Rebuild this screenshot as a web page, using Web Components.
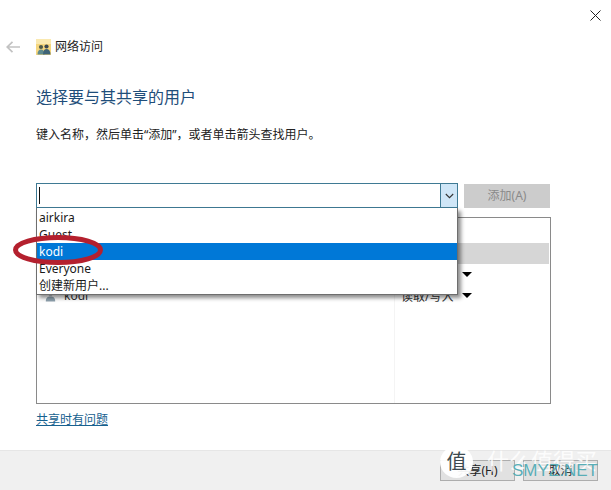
<!DOCTYPE html>
<html lang="zh">
<head>
<meta charset="utf-8">
<title>网络访问</title>
<style>
    html, body { margin: 0; padding: 0; background: #fff; }
    body { font-family: "Noto Sans", "Noto Sans CJK SC", sans-serif; font-size: 12px; color: #1a1a1a; }
</style>
</head>
<body>
<share-dialog></share-dialog>

<script>
const CJK = `"Noto Sans", "Noto Sans CJK SC", sans-serif`;

class NavHeader extends HTMLElement {
    constructor() {
        super();
        this.attachShadow({ mode: 'open' });
        this.shadowRoot.innerHTML = `
            <style>
                :host { display: block; font-family: ${CJK}; }
                .top { height: 37px; display: flex; justify-content: flex-end; padding: 10px 10px 0 0; box-sizing: border-box; }
                .nav { height: 19px; display: flex; align-items: center; padding-left: 6px; }
                .back { width: 14px; height: 12px; margin-right: 16px; }
                .icon { width: 15px; height: 16px; margin-right: 4px; }
                .title { font-size: 12px; line-height: 19px; color: #222; }
            </style>
            <div class="top">
                <svg width="11" height="11" viewBox="0 0 11 11"><path d="M.5.5l10 10M10.500.5l-10 10" stroke="#222" stroke-width="1" fill="none"/></svg>
            </div>
            <div class="nav">
                <svg class="back" viewBox="0 0 14 12"><path d="M6.500.8L1.200 6l5.300 5.200M1.500 6H14" stroke="#c2c2c2" stroke-width="1.700" fill="none"/></svg>
                <svg class="icon" viewBox="0 0 15 16">
                    <rect x="0" y="0" width="15" height="16" fill="#f5d67e"/>
                    <rect x="0" y="0" width="15" height="5" fill="#fae9b0"/>
                    <circle cx="5" cy="8" r="2.100" fill="#4d5a4a"/>
                    <circle cx="10.500" cy="7.500" r="2.100" fill="#3a4650"/>
                    <path d="M1.500 15.500c0-3.500 1.500-5 3.500-5s3.500 1.500 3.500 5z" fill="#5f8a8e"/>
                    <path d="M7 15.500c0-3.700 1.500-5.500 3.500-5.500s4 1.800 4 5.500z" fill="#3f6478"/>
                </svg>
                <span class="title">网络访问</span>
            </div>
        `;
    }
}

class UserCombo extends HTMLElement {
    constructor() {
        super();
        this.attachShadow({ mode: 'open' });
        this.shadowRoot.innerHTML = `
            <style>
                :host { display: block; position: relative; flex: 0 0 422px; font-family: ${CJK}; }
                .box { height: 25px; box-sizing: border-box; border: 1px solid #3f7a94; display: flex; background: #fff; }
                .field { flex: 1; display: flex; align-items: center; padding-left: 2px; }
                .caret { width: 1px; height: 17px; background: #111; }
                .drop { width: 16px; background: #cfe6f7; border-left: 1px solid #3f7a94; display: flex; align-items: center; justify-content: center; }
                .menu {
                    position: absolute; left: 0; right: 0; top: 25px; z-index: 3; height: 87px;
                    box-sizing: border-box; background: #fff;
                    border: 1px solid #6e6e6e; border-top: 0;
                    box-shadow: 3px 3px 4px rgba(0, 0, 0, .45);
                    padding-top: 1px;
                }
                ::slotted(*) { display: block; }
            </style>
            <div class="box">
                <div class="field"><span class="caret"></span></div>
                <div class="drop"><svg width="9" height="6" viewBox="0 0 9 6"><path d="M.8 1l3.700 3.700L8.200 1" stroke="#333" stroke-width="1.100" fill="none"/></svg></div>
            </div>
            <div class="menu"><slot></slot></div>
        `;
    }
}

class ComboOption extends HTMLElement {
    constructor() {
        super();
        this.attachShadow({ mode: 'open' });
        this.shadowRoot.innerHTML = `
            <style>
                :host { display: block; height: 17px; line-height: 17px; padding-left: 2px; font-size: 12px; color: #1a1a1a; white-space: nowrap; font-family: ${CJK}; }
                :host([selected]) { background: #0078d7; color: #fff; }
            </style>
            <slot></slot>
        `;
    }
}

class PermissionRow extends HTMLElement {
    constructor() {
        super();
        this.attachShadow({ mode: 'open' });
        this.shadowRoot.innerHTML = `
            <style>
                :host { display: grid; grid-template-columns: 357px 1fr; height: 21px; align-items: center; font-size: 12px; color: #333; font-family: ${CJK}; }
                :host([selected]) { background: #d6d6d6; margin-right: 1px; }
                :host([selected]) .arrow { display: none; }
                .name { display: flex; align-items: center; gap: 8px; padding-left: 8px; }
                .perm { display: flex; align-items: center; gap: 6px; padding-left: 7px; }
                .arrow { width: 0; height: 0; border: 5px solid transparent; border-top: 5px solid #000; border-bottom: 0; }
                .spacer { width: 55px; }
            </style>
            <div class="name">
                <svg width="11" height="12" viewBox="0 0 11 12"><circle cx="5.500" cy="3" r="2.600" fill="#7c8b96"/><path d="M.8 11.500c0-4 2-5 4.700-5s4.700 1 4.700 5z" fill="#8fa2ae"/></svg>
                <slot name="name"></slot>
            </div>
            <div class="perm"><span class="spacer"><slot name="perm"></slot></span><span class="arrow"></span></div>
        `;
    }
}

class UserList extends HTMLElement {
    constructor() {
        super();
        this.attachShadow({ mode: 'open' });
        this.shadowRoot.innerHTML = `
            <style>
                :host { display: block; position: relative; width: 515px; height: 187px; box-sizing: border-box; border: 1px solid #8a8a8a; background: #fff; margin-top: 9px; }
                .head { height: 25px; }
                .col { position: absolute; left: 357px; top: 0; bottom: 0; width: 1px; background: #f4f4f4; }
            </style>
            <div class="col"></div>
            <div class="head"></div>
            <slot></slot>
        `;
    }
}

class SmzdmMark extends HTMLElement {
    constructor() {
        super();
        this.attachShadow({ mode: 'open' });
        this.shadowRoot.innerHTML = `
            <style>
                :host { display: block; position: absolute; left: 440px; top: 446px; width: 165px; height: 40px; z-index: 5; pointer-events: none; font-family: ${CJK}; }
                .badge { position: absolute; left: 0; top: 0; width: 33px; height: 32px; border-radius: 50%; background: rgba(255, 255, 255, .94); color: #3c4a50; font-size: 20px; line-height: 32px; text-align: center; }
                .cn { position: absolute; left: 47px; top: 3px; font-size: 22px; line-height: 22px; color: rgba(255, 255, 255, .85); white-space: nowrap; }
                .en { position: absolute; left: 72px; top: 15px; font-size: 17px; line-height: 20px; color: rgba(80, 170, 180, .95); white-space: nowrap; font-family: "Liberation Sans", sans-serif; }
            </style>
            <div class="badge">值</div>
            <div class="cn">什么值得买</div>
            <div class="en">SMYZ.NET</div>
        `;
    }
}

class ShareDialog extends HTMLElement {
    constructor() {
        super();
        this.attachShadow({ mode: 'open' });
        this.shadowRoot.innerHTML = `
            <style>
                :host { display: flex; flex-direction: column; position: relative; width: 611px; height: 490px; overflow: hidden; background: #fff; font-family: ${CJK}; }
                main { flex: 1; }
                .content { padding: 0 0 0 36px; }
                h1 { margin: 30px 0 0; font-size: 16px; line-height: 22px; font-weight: 400; color: #1f4e7a; }
                p { margin: 18px 0 0; font-size: 12px; line-height: 18px; color: #222; }
                .row { display: flex; gap: 6px; margin-top: 39px; }
                .add { width: 86px; height: 24px; margin-top: 1px; background: #cccccc; color: #8a8a8a; font-size: 12px; line-height: 24px; text-align: center; }
                a { display: inline-block; margin-top: 7px; font-size: 12px; line-height: 17px; color: #17618f; text-decoration: underline; }
                footer { flex: 0 0 40px; box-sizing: border-box; border-top: 1px solid #e6e6e6; background: #f0f0f0; display: flex; justify-content: flex-end; gap: 8px; padding: 9px 13px 0 0; }
                .btn { width: 75px; height: 21px; box-sizing: border-box; border: 1px solid #adadad; background: #e1e1e1; font-size: 12px; line-height: 19px; text-align: center; color: #222; }
                .ring { position: absolute; left: 13px; top: 235px; width: 90px; height: 30px; z-index: 4; }
            </style>
            <main>
                <nav-header></nav-header>
                <div class="content">
                    <h1>选择要与其共享的用户</h1>
                    <p>键入名称，然后单击“添加”，或者单击箭头查找用户。</p>
                    <div class="row">
                        <user-combo>
                            <combo-option>airkira</combo-option>
                            <combo-option>Guest</combo-option>
                            <combo-option selected>kodi</combo-option>
                            <combo-option>Everyone</combo-option>
                            <combo-option>创建新用户...</combo-option>
                        </user-combo>
                        <div class="add">添加(A)</div>
                    </div>
                    <user-list>
                        <permission-row selected><span slot="name">airkira</span><span slot="perm">所有者</span></permission-row>
                        <permission-row><span slot="name">Everyone</span><span slot="perm">读取</span></permission-row>
                        <permission-row><span slot="name">kodi</span><span slot="perm">读取/写入</span></permission-row>
                    </user-list>
                    <a>共享时有问题</a>
                </div>
            </main>
            <footer>
                <div class="btn">共享(H)</div>
                <div class="btn">取消</div>
            </footer>
            <svg class="ring" viewBox="0 0 90 30"><ellipse cx="45" cy="15" rx="42.500" ry="12.500" fill="none" stroke="#b4202e" stroke-width="5"/></svg>
            <smzdm-mark></smzdm-mark>
        `;
    }
}

customElements.define('nav-header', NavHeader);
customElements.define('user-combo', UserCombo);
customElements.define('combo-option', ComboOption);
customElements.define('permission-row', PermissionRow);
customElements.define('user-list', UserList);
customElements.define('smzdm-mark', SmzdmMark);
customElements.define('share-dialog', ShareDialog);
</script>
</body>
</html>
